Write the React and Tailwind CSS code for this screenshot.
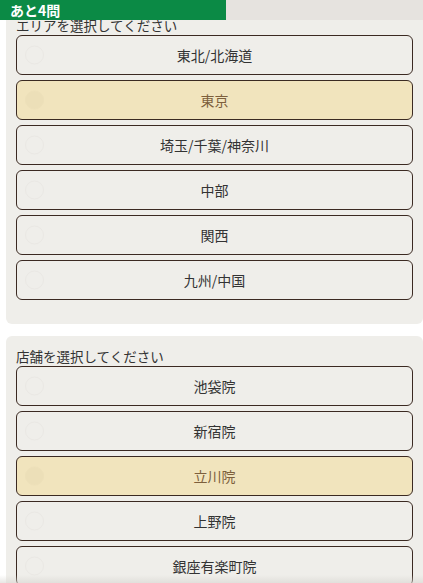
const areas = ["東北/北海道", "東京", "埼玉/千葉/神奈川", "中部", "関西", "九州/中国"];
const shops = ["池袋院", "新宿院", "立川院", "上野院", "銀座有楽町院"];

function Choice({ label, selected }) {
  return (
    <button
      className={
        "relative flex h-[40px] w-full items-center justify-center rounded-[6px] border-[1.5px] border-[#3b2a22] text-[14px] " +
        (selected ? "bg-[#f1e4bd] text-[#7d5f3c]" : "bg-[#efeeea] text-[#333]")
      }
    >
      <span
        className={
          "absolute left-[8px] top-1/2 h-[19px] w-[19px] -translate-y-1/2 rounded-full border " +
          (selected ? "border-[#ede0b9] bg-[#ecdfb8]" : "border-[#eae8e4] bg-transparent")
        }
      />
      {label}
    </button>
  );
}

function Section({ title, items, selected }) {
  return (
    <div className="rounded-[6px] bg-[#efeeea] px-[10px] pb-[24px] pt-[11px]">
      <p className="mb-[1px] text-[13.5px] leading-[18px] text-[#333]">{title}</p>
      <div className="flex flex-col gap-[5px]">
        {items.map((it) => (
          <Choice key={it} label={it} selected={it === selected} />
        ))}
      </div>
    </div>
  );
}

export default function App() {
  return (
    <div
      className="relative h-[583px] w-[423px] overflow-hidden bg-white"
      style={{ fontFamily: '"Noto Sans CJK JP", "Noto Sans", sans-serif' }}
    >
      <div className="absolute left-0 top-0 z-10 flex h-[20px] w-full bg-[#e6e3df]">
        <div className="flex h-full w-[226px] items-center bg-[#0b8a45] pl-[10px] text-[14px] font-bold text-white">
          あと4問
        </div>
      </div>

      <div className="flex flex-col gap-[12px] pl-[6px] pt-[5px]">
        <Section title="エリアを選択してください" items={areas} selected="東京" />
        <Section title="店舗を選択してください" items={shops} selected="立川院" />
      </div>

      <div className="pointer-events-none absolute bottom-0 left-0 h-[8px] w-full bg-gradient-to-b from-transparent to-[#d8d6d1]/60" />
    </div>
  );
}
